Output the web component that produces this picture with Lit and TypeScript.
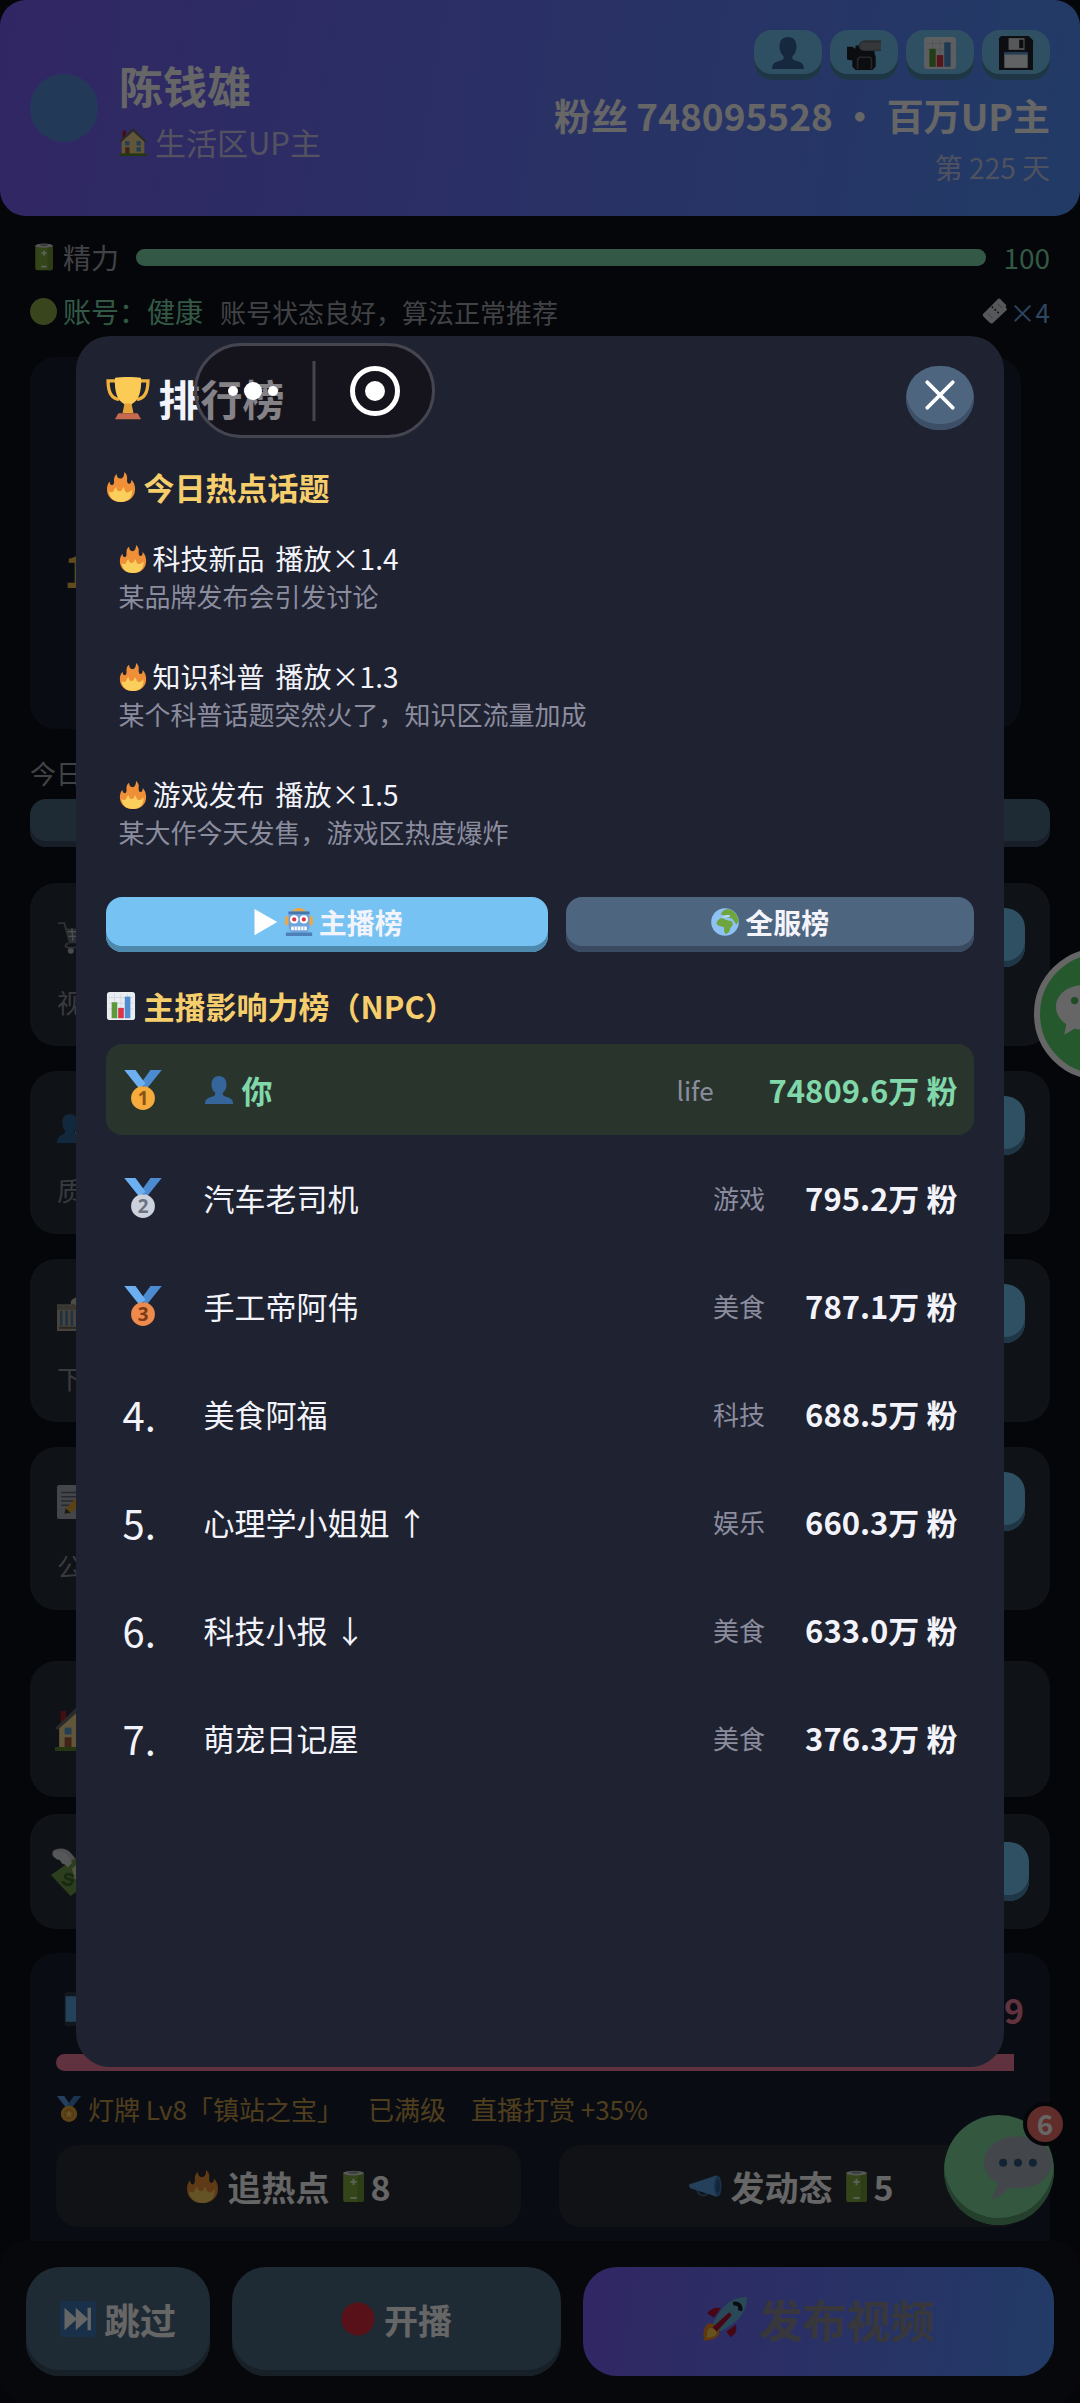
import { LitElement, html, css, svg, nothing } from "lit";
import type { SVGTemplateResult } from "lit";
import { customElement, property, state } from "lit/decorators.js";
import { classMap } from "lit/directives/class-map.js";

const medal = (n: string, fill: string, ink: string) => svg`
  <path d="M31 0h-9l-8 11 5 4z" fill="#4c8bd0"/>
  <path d="M1 0h9l8 11-5 4z" fill="#6cb0f2"/>
  <circle cx="16" cy="22.500" r="9.500" fill=${fill}/>
  <text x="16" y="28" font-size="15" font-weight="700" text-anchor="middle" fill=${ink}>${n}</text>`;

const bust = svg`
  <path d="M16 1c5.500 0 8 4 8 9 0 4-1.500 7-4 9 0 3 1 3.500 4.500 4.500C29 24.800 31 26.500 31 31H1c0-4.500 2-6.200 6.500-7.500C11 22.500 12 22 12 19c-2.500-2-4-5-4-9 0-5 2.500-9 8-9z" fill="#35659a"/>`;

const battery = svg`
  <rect x="6" y="2" width="20" height="29" rx="2.500" fill="#83ad42"/>
  <path d="M20 2h4a2 2 0 0 1 2 2v25a2 2 0 0 1-2 2h-4z" fill="#729a38"/>
  <ellipse cx="16" cy="3" rx="10" ry="2.300" fill="#d5dbd8"/>
  <ellipse cx="16" cy="2.400" rx="5" ry="1.300" fill="#8f9a94"/>
  <path d="M13 11.500h6M16 8.500v6M13 27h6" stroke="#eef6e4" stroke-width="1.800"/>`;

const fire = svg`
  <path d="M16 32C7 32 1 26.500 1 18.500 1 15 2 12 4 10c0 2 .5 3.500 2.500 4C8.500 13.500 9 11 8.500 8.500 8.500 5.500 9.500 3.500 11.500 2 11.500 5 13 7 15.500 7 18 7 19.500 4.500 19.500 0c2.500 2 3.500 4.500 3 8-.3 2.500.5 4.500 2 4.500 2 0 2.800-2 2.500-4.500C30 11 31 14.500 31 18.500 31 26.500 25 32 16 32z" fill="#ef9038"/>
  <path d="M16 32c-8 0-12.500-5-13-11.500 1.500 1.200 3 1.500 4.500.5 1.500-1.200 1-3.500 3.500-5 0 2.500 1 4.500 3.500 4.500 2 0 3.500-2 3.500-4.500 2.200 1.500 1.500 4.500 3.500 5.500 1.700.8 4 0 6.500-3C28.500 27 24 32 16 32z" fill="#fbcf5c"/>`;

const chart = svg`
  <rect x="1" y="1" width="30" height="30" rx="3" fill="#e9edf2"/>
  <path d="M3 7h26M3 13h26M3 19h26M9 3v26M16 3v26M23 3v26" stroke="#c9d2dd" stroke-width=".8"/>
  <rect x="6" y="12" width="6" height="17" fill="#5b9a3b"/>
  <rect x="13" y="18" width="6" height="11" fill="#d8344a"/>
  <rect x="20" y="6" width="6" height="23" fill="#4f8dd0"/>`;

const house = svg`
  <rect x="4" y="3" width="4" height="8" fill="#a3272f"/>
  <path d="M3 15 16 3l13 12v15H3z" fill="#f2d492"/>
  <path d="M0 15.500 16 0l16 15.500-2 1L16 4 2 16.500z" fill="#6d6a6a"/>
  <rect x="7" y="15" width="5" height="5" fill="#5a9bd6"/>
  <rect x="20" y="15" width="5" height="5" fill="#5a9bd6"/>
  <rect x="7" y="22" width="5" height="8" fill="#a65a3a"/>
  <rect x="20" y="22" width="5" height="5" fill="#5a9bd6"/>
  <path d="M0 29h32v3H0z" fill="#5c8a2e"/>`;

const ICONS: Record<string, SVGTemplateResult> = {
  bust,
  battery,
  fire,
  chart,
  house,
  medal1: medal("1", "#f5ac3c", "#8a5310"),
  medal2: medal("2", "#ccd2dc", "#6b7280"),
  medal3: medal("3", "#ee8a4c", "#7c3a14"),
  medal: svg`
    <path d="M1 0h9l7 10-4 5z" fill="#5da0ea"/><path d="M31 0h-9l-8 11 5 4z" fill="#4380c8"/>
    <circle cx="16" cy="22" r="10" fill="#eda93c"/><circle cx="16" cy="22" r="6.500" fill="#d8922c"/>
    <path d="m16 17 1.500 3.300 3.500.4-2.600 2.400.7 3.500-3.100-1.800-3.100 1.800.7-3.500-2.600-2.400 3.500-.4z" fill="#f7cf62"/>`,
  trophy: svg`
    <path d="M7 3.500H1.500C1.500 11 3.500 16.500 9.500 17M25 3.500h5.500C30.500 11 28.500 16.500 22.500 17" fill="none" stroke="#efb23f" stroke-width="2.400"/>
    <path d="M6.500 1.500C9 .5 23 .5 25.500 1.500 26 11 24 18 18.500 20.500V25h-5v-4.500C8 18 6 11 6.500 1.500z" fill="#fbcb55"/>
    <path d="M13.500 20h5l1.500 7h-8z" fill="#e3a43a"/>
    <path d="M9 27h14l2.500 4.500h-19z" fill="#c56a4e"/>`,
  camera: svg`
    <path d="M0 10h5l3 2v-3h5V7h4v5h9v5l1 2v10l-3 3H8l-3-3v-6l-5-1z" fill="#1e2228"/>
    <path d="M14 5l2-1h16v10H16c-3 0-5-2-5-4.500S12 6 14 5z" fill="#6a7078"/>
    <path d="M14 6h18v7H15c-3 0-3-7-1-7z" fill="#868c95"/>
    <path d="M10 31v-9l2-2h10l1 2v9" fill="none" stroke="#5a6068" stroke-width="1.500"/>`,
  floppy: svg`
    <path d="M2 0h26l4 4v28H0V2z" fill="#20242b"/>
    <rect x="9" y="2" width="15" height="11" fill="#d6dbe2"/><rect x="19" y="3.500" width="4" height="8" fill="#20242b"/>
    <rect x="5" y="16" width="22" height="14" fill="#f1f4f7"/><rect x="5" y="15" width="22" height="2.500" fill="#5b93cf"/>`,
  ticket: svg`
    <path d="M20 1c2-1 3 1 5 3l5 5-1 2 2 3L13 31c-2 1-4-1-5-2l-6-6c-1-1-1-2-1-3z" fill="#d9dde2"/>
    <path d="M12 10.500 21.500 19.500" stroke="#333a44" stroke-width="2" stroke-dasharray="2.500 2.200"/>
    <path d="M19 7l6 5M7 19l6 6" stroke="#aab0b9" stroke-width="1.500"/>`,
  play: svg`<path d="M4 1l26 15L4 31z" fill="#fff"/>`,
  robot: svg`
    <path d="M7 6C8 2 12 0 16 0s8 2 9 6z" fill="#e8a94c"/>
    <rect x="0" y="9" width="5" height="11" rx="2.500" fill="#e8a94c"/><rect x="27" y="9" width="5" height="11" rx="2.500" fill="#e8a94c"/>
    <path d="M4 6c0-1 1-2 2-2h20c1 0 2 1 2 2v13c0 6-3 9-4 9H8c-1 0-4-3-4-9z" fill="#6fa3dc"/>
    <path d="M4 4h24v3H4z" fill="#4677ab"/>
    <circle cx="10.500" cy="13" r="4.700" fill="#fff"/><circle cx="21.500" cy="13" r="4.700" fill="#fff"/>
    <circle cx="10.500" cy="13" r="2.400" fill="#d8344a"/><circle cx="21.500" cy="13" r="2.400" fill="#d8344a"/>
    <rect x="7" y="21" width="18" height="4.500" rx="1" fill="#fff"/>
    <path d="M10.500 21v4.500M14 21v4.500M18 21v4.500M21.500 21v4.500" stroke="#6fa3dc" stroke-width=".9"/>
    <path d="M1 28h30v4H1z" fill="#4d7fb8"/>`,
  globe: svg`
    <circle cx="16" cy="16" r="15.800" fill="#8ec2f5"/>
    <path d="M13 4c3-3 7-3 10-2 5 3 8 8 8.500 13l-2.500 4-2-3-3-4-4-1-5 0-2-1 1-2-3-1z" fill="#6ea53f"/>
    <path d="M8 14c2-3 6-3 8-1l3 1 5 1 1 4-3 4-1 4-4 3-2-3 0-5-3-1-4-1-2-3z" fill="#6ea53f"/>
    <path d="M13 9l4-1 4 0 1 2-4 1-5 0z" fill="#b7d8f7"/>`,
  cart: svg`
    <path d="M1 2h6l5 18h16" fill="none" stroke="#767c84" stroke-width="1.800"/>
    <path d="M9 7h22l-3 12H12z" fill="#6d737b"/>
    <path d="M10 10h20M11 14.500h18M14 7l1 12M19 7v12M24 7v12M28 7l-1 12" stroke="#c3c8ce" stroke-width="1.200"/>
    <circle cx="13" cy="28" r="2.800" fill="#b5bac1"/><circle cx="26" cy="28" r="2.800" fill="#b5bac1"/>
    <path d="M11 21c-4 1-4 4 0 4h17" fill="none" stroke="#767c84" stroke-width="1.600"/>`,
  busts: svg`
    <path d="M21 1c5 0 7 3 7 8 0 4-1 6-3 8 1 4 7 3 7 11H16z" fill="#5fa0d8"/>
    <path d="M12 5c5 0 7 3 7 8 0 3-1 6-3 8 0 4 7 3 8 11H0c0-8 7-7 8-11-2-2-3-5-3-8 0-5 2-8 7-8z" fill="#2f6699"/>`,
  building: svg`
    <path d="M13 5c0-3 6-6 12-5v8H13z" fill="#c3beb7"/>
    <rect x="0" y="7" width="32" height="25" fill="#b3a99a"/>
    <path d="M0 9l3-3 3 3 3-3 3 3 3-3 3 3h14v3H0z" fill="#8f8575"/>
    <path d="M4 13v14M9 13v14M14 13v14M19 13v14M24 13v14" stroke="#4b7ea4" stroke-width="2.400"/>
    <path d="M2 29h28" stroke="#6d6458" stroke-width="2"/>`,
  memo: svg`
    <rect x="0" y="0" width="28" height="32" rx="2" fill="#aab0b9"/>
    <path d="M4 7h20M4 11h20M4 15h12M4 19h9" stroke="#5d646e" stroke-width="1.400"/>
    <path d="M8 22 20 10l7 5-14 11-6 1z" fill="#e0a63a"/><path d="m8 22 5 4-6 1z" fill="#3d3f45"/>`,
  money: svg`
    <path d="M3 1c6-2 10 1 13 6l8 14-10-1C11 16 14 12 10 11 5 11 8 7 4 7 0 6 0 2 3 1z" fill="#c3c8ce"/>
    <path d="M0 18 20 4l12 14-19 14z" fill="#6f9c4a"/><path d="m14 14 8-8 6 8-12 7z" fill="#d9cfa8"/>
    <path d="M3 2c4-1 8 1 11 8l-3 3c-1-3-4-2-5-5-4 0-6-5-3-6z" fill="#d5d9de"/>
    <path d="M15 19c-3-3-7-1-5 1s6 0 4 3-6 1-6-1" fill="none" stroke="#3c6b2a" stroke-width="2"/>`,
  phone: svg`<rect x="8" y="0" width="20" height="32" rx="2" fill="#2e3a4a"/><rect x="9" y="4" width="18" height="24" fill="#5ba7e4"/>`,
  megaphone: svg`
    <path d="M8 18c0 8 8 8 10 4" fill="none" stroke="#46658a" stroke-width="2"/>
    <path d="M0 14 27 5c3 3 3 18 0 21L2 18c-2-1-2-3-2-4z" fill="#5aa0e0"/>
    <ellipse cx="28" cy="15.500" rx="3.600" ry="10" fill="#3d79b8"/><ellipse cx="28" cy="15.500" rx="2" ry="6.500" fill="#2b5c92"/>`,
  skip: svg`
    <rect width="32" height="32" rx="3.500" fill="#3f78b8"/>
    <path d="M4 6l11 10L4 26zM14 6l11 10-11 10z" fill="#fff"/><rect x="24.500" y="6" width="3" height="20" fill="#fff"/>`,
  record: svg`<circle cx="16" cy="16" r="15.500" fill="#dc2c3c"/>`,
  rocket: svg`
    <path d="M3 12c2-3 5-5 10-4l-5 7zM20 29c3-1 5-4 4-9l-7 5z" fill="#b01030"/>
    <path d="M2 21c2-3 6-2 8 0s3 6 0 8c-2 2-6 2-9 3-1-3-1-8 1-11z" fill="#f08a2c"/>
    <path d="M4 23c2-1 4 0 5 1s1 3 0 4-4 1-6 2c0-3 0-6 1-7z" fill="#f9cf50"/>
    <path d="M32 0c-9 0-15 4-20 11l-5 8 6 6 8-5C28 15 32 9 32 0z" fill="#68b3dc"/>
    <path d="M7 22 19 11l2 2L10 25z" fill="#b01030"/>
    <path d="M22 5c3-1 6 1 5 5" fill="none" stroke="#15202c" stroke-width="3"/>`,
  chat: svg`
    <path d="M16 2c9 0 16 5 16 12.200S25 26.500 16 26.500c-1.500 0-3 0-4.300-.4C9.500 29 6.500 31 3 32c1.500-2.500 3-5 3.500-7.800C2.500 22 0 18.500 0 14.200 0 7 7 2 16 2z" fill="#a9b0ba"/>
    <circle cx="9" cy="14.500" r="1.900" fill="#33587f"/><circle cx="16" cy="14.500" r="1.900" fill="#33587f"/><circle cx="23" cy="14.500" r="1.900" fill="#33587f"/>`,
  wechat: svg`
    <path d="M13 2C6 2 0 6.500 0 12.500c0 3.500 2 6.500 5 8.500l-1 5 5-3c1.500.5 3 .5 4 .5 7 0 13-4.500 13-10.500S20 2 13 2z" fill="#fff"/>
    <circle cx="9" cy="9.500" r="1.800" fill="#4fbf62"/><circle cx="17" cy="9.500" r="1.800" fill="#4fbf62"/>
    <path d="M22 12c6 0 10 3.500 10 8s-4 8-10 8-10-3.500-10-8 4-8 10-8z" fill="#fff"/>`,
  close: svg`<path d="M4 4l24 24M28 4 4 28" stroke="#fff" stroke-width="3.600" stroke-linecap="round"/>`,
};

@customElement("game-icon")
class GameIcon extends LitElement {
  @property() name = "";
  static styles = css`
    :host { display: inline-flex; flex: none; width: 1em; height: 1em; }
    svg { width: 100%; height: 100%; overflow: visible; font-family: "Noto Sans", sans-serif; }
  `;
  render() {
    return html`<svg viewBox="0 0 32 32" aria-hidden="true">${ICONS[this.name] ?? nothing}</svg>`;
  }
}

interface Rank { icon?: string; name: string; genre: string; fans: string; me?: boolean; }

@customElement("ranking-dialog")
class RankingDialog extends LitElement {
  @state() private tab = 0;

  private topics = [
    { name: "科技新品", boost: "播放×1.4", note: "某品牌发布会引发讨论" },
    { name: "知识科普", boost: "播放×1.3", note: "某个科普话题突然火了，知识区流量加成" },
    { name: "游戏发布", boost: "播放×1.5", note: "某大作今天发售，游戏区热度爆炸" },
  ];

  private ranks: Rank[] = [
    { icon: "medal1", name: "你", genre: "life", fans: "74809.6万 粉", me: true },
    { icon: "medal2", name: "汽车老司机", genre: "游戏", fans: "795.2万 粉" },
    { icon: "medal3", name: "手工帝阿伟", genre: "美食", fans: "787.1万 粉" },
    { name: "美食阿福", genre: "科技", fans: "688.5万 粉" },
    { name: "心理学小姐姐 ↑", genre: "娱乐", fans: "660.3万 粉" },
    { name: "科技小报 ↓", genre: "美食", fans: "633.0万 粉" },
    { name: "萌宠日记屋", genre: "美食", fans: "376.3万 粉" },
  ];

  static styles = css`
    :host { display: block; box-sizing: border-box; width: 86%; height: 72%; padding: 30px; border-radius: 34px; background: #1f2230; color: #f3f4fb; overflow: hidden; }
    h2, h3, p, ul, ol { margin: 0; padding: 0; }
    ul, ol { list-style: none; }
    button { font: inherit; color: inherit; border: 0; padding: 0; cursor: pointer; }
    .head { display: flex; align-items: center; justify-content: space-between; height: 64px; }
    .title { display: flex; align-items: center; gap: 9px; font-size: 42px; line-height: 64px; }
    .title game-icon { font-size: 44px; }
    .close { display: grid; place-items: center; width: 68px; height: 64px; padding-bottom: 6px; border-radius: 34px; background: #4d657f; box-shadow: inset 0 -6px #3c4f66; }
    .close game-icon { font-size: 34px; }
    .section { display: flex; align-items: center; gap: 8px; color: #f6ce6c; font-size: 31px; line-height: 40px; }
    .section game-icon { font-size: 30px; }
    .hot { margin-top: 37px; }
    .topics { margin: 11px 0 25px; }
    .topic { padding: 22px 13px; line-height: 37px; }
    .topic-name { display: flex; align-items: center; gap: 6px; font-size: 28px; }
    .boost { margin-left: 5px; }
    .note { color: #8b8d9f; font-size: 26px; }
    .tabs { display: flex; gap: 18px; }
    .tab { flex: 1 1 auto; display: flex; align-items: center; justify-content: center; gap: 6px; height: 55px; padding-bottom: 5px; border-radius: 16px; background: #4d657f; box-shadow: inset 0 -6px #3a4b61; font-size: 28px; font-weight: 700; }
    .tab game-icon { font-size: 28px; }
    .tab.on { background: #76c2f3; box-shadow: inset 0 -6px #4d88ad; }
    .board { margin: 34px 0 18px; }
    .ranks { display: flex; flex-direction: column; gap: 17px; }
    .rank { display: flex; align-items: center; height: 91px; padding: 0 17px; border-radius: 16px; font-size: 31px; }
    .place { width: 81px; font-size: 40px; display: flex; }
    .who { flex: 1; display: flex; align-items: center; gap: 8px; }
    .who game-icon { font-size: 30px; }
    .genre { min-width: 52px; margin-right: 40px; color: #8b8d9f; font-size: 26px; }
    .fans { font-weight: 700; }
    .me { background: #29352c; }
    .me .who, .me .fans { color: #80d8aa; font-weight: 700; }
  `;

  render() {
    const tabs = [["robot", "主播榜"], ["globe", "全服榜"]];
    return html`
      <div class="head">
        <h2 class="title"><game-icon name="trophy"></game-icon>排行榜</h2>
        <button class="close" aria-label="关闭"><game-icon name="close"></game-icon></button>
      </div>
      <h3 class="section hot"><game-icon name="fire"></game-icon>今日热点话题</h3>
      <ul class="topics">
        ${this.topics.map((t) => html`
          <li class="topic">
            <p class="topic-name"><game-icon name="fire"></game-icon>${t.name}<span class="boost">${t.boost}</span></p>
            <p class="note">${t.note}</p>
          </li>`)}
      </ul>
      <div class="tabs" role="tablist">
        ${tabs.map(([icon, label], i) => html`
          <button role="tab" aria-selected=${this.tab === i} class=${classMap({ tab: true, on: this.tab === i })} @click=${() => (this.tab = i)}>
            ${this.tab === i ? html`<game-icon name="play"></game-icon>` : nothing}
            <game-icon name=${icon}></game-icon>${label}
          </button>`)}
      </div>
      <h3 class="section board"><game-icon name="chart"></game-icon>主播影响力榜（NPC）</h3>
      <ol class="ranks">
        ${this.ranks.map((r, i) => html`
          <li class=${classMap({ rank: true, me: !!r.me })}>
            <span class="place">${r.icon ? html`<game-icon name=${r.icon}></game-icon>` : `${i + 1}.`}</span>
            <span class="who">${r.me ? html`<game-icon name="bust"></game-icon>` : nothing}${r.name}</span>
            <span class="genre">${r.genre}</span>
            <span class="fans">${r.fans}</span>
          </li>`)}
      </ol>`;
  }
}

@customElement("app-root")
class AppRoot extends LitElement {
  private tasks = [
    { icon: "cart", text: "视" },
    { icon: "busts", text: "质" },
    { icon: "building", text: "下" },
    { icon: "memo", text: "公" },
  ];

  static styles = css`
    :host { display: block; font-family: "Noto Sans CJK SC", "Noto Sans", sans-serif; color: #fff; }
    * { box-sizing: border-box; }
    h1, p { margin: 0; }
    button { font: inherit; color: inherit; border: 0; padding: 0; cursor: pointer; }
    .page { position: relative; display: flex; flex-direction: column; height: 100vh; overflow: hidden; background: #0a0f17; }
    .top { flex: none; display: flex; align-items: center; gap: 21px; height: 216px; padding: 0 30px; border-radius: 26px; background: linear-gradient(100deg, #7b60fa, #5593ff); }
    .avatar { width: 68px; height: 68px; border-radius: 50%; background: #5591dd; }
    .id { flex: 1; display: flex; flex-direction: column; padding-top: 4px; }
    .name { font-size: 44px; line-height: 64px; }
    .zone { display: flex; align-items: center; gap: 8px; font-size: 31px; line-height: 50px; color: #d2cdf2; }
    .zone game-icon { font-size: 28px; }
    .stats { display: flex; flex-direction: column; align-items: flex-end; padding-top: 6px; }
    .tools { display: flex; gap: 8px; }
    .tool { display: grid; place-items: center; width: 68px; height: 50px; padding-bottom: 4px; border-radius: 18px; background: #75c8f4; box-shadow: inset 0 -6px #4c88ad; }
    .tool game-icon { font-size: 34px; }
    .fans { margin-top: 8px; font-size: 37px; line-height: 54px; font-weight: 700; }
    .day { font-size: 28px; line-height: 50px; color: #c3cbef; }

    .body { flex: 1; min-height: 0; overflow: hidden; padding: 25px 30px 0; }
    .line { display: flex; align-items: center; height: 32px; font-size: 28px; color: #a4a5ae; }
    .line game-icon { font-size: 28px; margin-right: 5px; }
    .meter { flex: 1; height: 17px; margin: 0 17px; border-radius: 9px; background: #80dcac; }
    .mint { color: #80dcac; }
    .status { margin-top: 22px; }
    .dot { width: 27px; height: 27px; margin-right: 6px; border-radius: 50%; background: #8cad4a; }
    .hint { flex: 1; margin-left: 17px; font-size: 26px; }
    .ticket { display: flex; align-items: center; font-size: 26px; color: #74b0f0; }
    .line .ticket game-icon { margin-right: 2px; font-size: 26px; }
    .income { height: 372px; margin: 30px 29px 0 0; padding: 180px 34px 0; border-radius: 26px; background: #1a2030; color: #f0b84c; font-size: 44px; line-height: 64px; font-weight: 700; }
    .today { margin-top: 28px; font-size: 26px; line-height: 32px; color: #a4a5ae; }
    .wide { display: block; width: 100%; height: 48px; margin-top: 10px; border-radius: 16px; background: #4d6982; box-shadow: inset 0 -6px #3a4b61; }
    .tasks { display: grid; gap: 25px; margin-top: 36px; }
    .card { border-radius: 26px; background: #272d39; }
    .task { height: 163px; padding: 25px 25px 0 27px; }
    .task-top { display: flex; align-items: center; justify-content: space-between; height: 59px; }
    .task-top game-icon { font-size: 34px; }
    .go { width: 140px; height: 59px; border-radius: 20px; background: #75c8f4; box-shadow: inset 0 -6px #4c88ad; }
    .task-text { margin-top: 19px; font-size: 26px; line-height: 32px; color: #8f929c; }
    .home, .cash { display: flex; align-items: center; justify-content: space-between; padding: 0 21px; }
    .home { height: 136px; margin-top: 51px; padding: 0 25px; font-size: 44px; }
    .cash { height: 115px; margin-top: 17px; font-size: 48px; }
    .fanclub { height: 340px; margin-top: 24px; padding: 37px 26px 0; border-radius: 26px; background: #1a2030; }
    .club-top { display: flex; align-items: center; justify-content: space-between; height: 38px; font-size: 34px; font-weight: 700; color: #f0809c; }
    .love { width: 99%; height: 17px; margin-top: 26px; border-radius: 9px 0 0 9px; background: #ef7e9e; }
    .badge-line { display: flex; align-items: center; gap: 25px; margin-top: 22px; font-size: 26px; line-height: 32px; color: #c49b4a; }
    .lamp { display: flex; align-items: center; gap: 6px; }
    .duo { display: grid; grid-template-columns: 1fr 1fr; gap: 38px; margin-top: 20px; }
    .act { display: flex; align-items: center; justify-content: center; gap: 8px; height: 82px; border-radius: 22px; background: #282d37; font-size: 34px; font-weight: 700; }
    .act game-icon { font-size: 33px; }
    .cost { display: flex; align-items: center; }

    .bar { flex: none; display: flex; gap: 22px; height: 162px; padding: 26px; border-radius: 26px; background: #13141f; }
    .big { display: flex; align-items: center; justify-content: center; gap: 9px; height: 109px; padding-bottom: 5px; border-radius: 34px; background: #4d6982; box-shadow: inset 0 -6px #3b5163; font-size: 34px; font-weight: 700; }
    .skip { flex: 184 1 0; font-size: 36px; gap: 8px; }
    .live { flex: 329 1 0; }
    .publish { flex: 471 1 0; gap: 12px; font-size: 44px; color: #8d8b96; background: linear-gradient(100deg, #7b60fa, #5593ff); box-shadow: none; }

    .chat { position: absolute; right: 26px; bottom: 178px; display: grid; place-items: center end; width: 110px; height: 110px; padding: 0 2px 8px 0; border-radius: 50%; background: #80dc9e; box-shadow: inset 0 -7px #5aa070; }
    .chat game-icon { font-size: 68px; }
    .count { position: absolute; top: -13px; right: -13px; width: 44px; height: 44px; border: 4px solid #0a0f17; border-radius: 50%; background: #f2706c; font-size: 28px; line-height: 34px; font-weight: 700; text-align: center; }
    .wechat { position: absolute; top: 948px; right: -86px; display: grid; align-items: center; width: 132px; height: 132px; padding-left: 16px; border: 6px solid #fff; border-radius: 50%; background: #5fdc74; }
    .wechat game-icon { font-size: 66px; }

    .shade { position: absolute; inset: 0; display: grid; place-items: center; background: rgba(0, 0, 0, 0.6); }
    .capsule { position: absolute; top: 343px; left: 18%; width: 241px; height: 95px; border: 3px solid #44454f; border-radius: 48px; background: rgba(10, 6, 8, 0.48); }
    .capsule svg { display: block; width: 100%; height: 100%; overflow: visible; }
  `;

  render() {
    const tools = [["bust", "角色"], ["camera", "视频"], ["chart", "数据"], ["floppy", "存档"]];
    return html`
      <div class="page">
        <header class="top">
          <span class="avatar"></span>
          <div class="id">
            <h1 class="name">陈钱雄</h1>
            <p class="zone"><game-icon name="house"></game-icon>生活区UP主</p>
          </div>
          <div class="stats">
            <div class="tools">${tools.map(([i, l]) => html`<button class="tool" aria-label=${l}><game-icon name=${i}></game-icon></button>`)}</div>
            <p class="fans">粉丝 748095528 · 百万UP主</p>
            <p class="day">第 225 天</p>
          </div>
        </header>
        <main class="body">
          <div class="line"><game-icon name="battery"></game-icon>精力<span class="meter"></span><span class="mint">100</span></div>
          <div class="line status"><span class="dot"></span><span class="mint">账号：健康</span><span class="hint">账号状态良好，算法正常推荐</span><span class="ticket"><game-icon name="ticket"></game-icon>×4</span></div>
          <section class="income">1</section>
          <p class="today">今日</p>
          <button class="wide" aria-label="今日"></button>
          <div class="tasks">
            ${this.tasks.map((t) => html`
              <section class="card task">
                <div class="task-top"><game-icon name=${t.icon}></game-icon><button class="go" aria-label=${t.text}></button></div>
                <p class="task-text">${t.text}</p>
              </section>`)}
          </div>
          <section class="card home"><game-icon name="house"></game-icon></section>
          <section class="card cash"><game-icon name="money"></game-icon><button class="go" aria-label="金币"></button></section>
          <section class="fanclub">
            <div class="club-top"><game-icon name="phone"></game-icon><span>9</span></div>
            <div class="love"></div>
            <div class="badge-line"><span class="lamp"><game-icon name="medal"></game-icon>灯牌 Lv8「镇站之宝」</span><span>已满级</span><span>直播打赏 +35%</span></div>
            <div class="duo">
              <button class="act"><game-icon name="fire"></game-icon>追热点<span class="cost"><game-icon name="battery"></game-icon>8</span></button>
              <button class="act"><game-icon name="megaphone"></game-icon>发动态<span class="cost"><game-icon name="battery"></game-icon>5</span></button>
            </div>
          </section>
        </main>
        <footer class="bar">
          <button class="big skip"><game-icon name="skip"></game-icon>跳过</button>
          <button class="big live"><game-icon name="record"></game-icon>开播</button>
          <button class="big publish"><game-icon name="rocket"></game-icon>发布视频</button>
        </footer>
        <button class="wechat" aria-label="微信"><game-icon name="wechat"></game-icon></button>
        <button class="chat" aria-label="消息"><game-icon name="chat"></game-icon><span class="count">6</span></button>
        <div class="shade"><ranking-dialog role="dialog" aria-label="排行榜"></ranking-dialog></div>
        <div class="capsule">
          <svg viewBox="0 0 235 89" aria-hidden="true">
            <g fill="#fff"><circle cx="36" cy="45" r="5"/><circle cx="56" cy="45" r="9"/><circle cx="76" cy="45" r="5"/><circle cx="178" cy="45" r="10"/></g>
            <path d="M117 15v60" stroke="#45454f" stroke-width="3"/>
            <circle cx="178" cy="45" r="22.500" fill="none" stroke="#fff" stroke-width="5"/>
          </svg>
        </div>
      </div>`;
  }
}
